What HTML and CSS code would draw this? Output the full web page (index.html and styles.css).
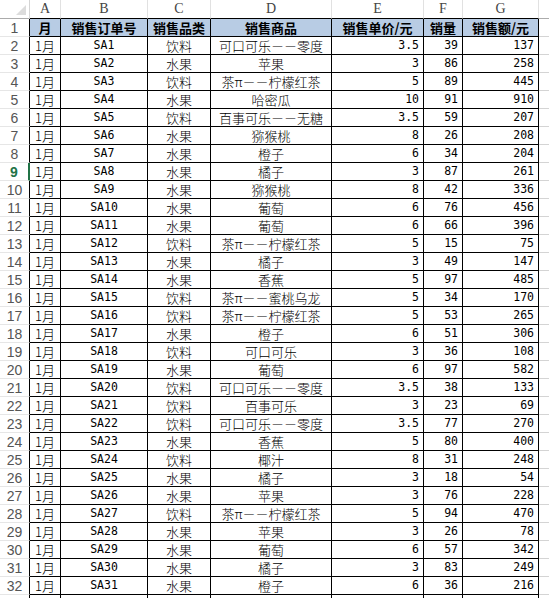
FILE: index.html
```html
<!DOCTYPE html>
<html lang="zh-CN">
<head>
<meta charset="utf-8">
<title>销售表</title>
<link rel="stylesheet" href="styles.css">
</head>
<body>
<div class="sheet">
  <div class="corner"><span class="tri"></span></div>
  <div class="ch">A</div><div class="ch">B</div><div class="ch">C</div><div class="ch">D</div><div class="ch">E</div><div class="ch">F</div><div class="ch">G</div><div class="ch last"></div>

  <div class="rh">1</div><div class="c hd">月</div><div class="c hd">销售订单号</div><div class="c hd">销售品类</div><div class="c hd">销售商品</div><div class="c hd">销售单价/元</div><div class="c hd">销量</div><div class="c hd">销售额/元</div><div class="g"></div>

  <div class="rh">2</div><div class="c">1月</div><div class="c m">SA1</div><div class="c">饮料</div><div class="c">可口可乐－－零度</div><div class="c n">3.5</div><div class="c n">39</div><div class="c n">137</div><div class="g"></div>
  <div class="rh">3</div><div class="c">1月</div><div class="c m">SA2</div><div class="c">水果</div><div class="c">苹果</div><div class="c n">3</div><div class="c n">86</div><div class="c n">258</div><div class="g"></div>
  <div class="rh">4</div><div class="c">1月</div><div class="c m">SA3</div><div class="c">饮料</div><div class="c">茶π－－柠檬红茶</div><div class="c n">5</div><div class="c n">89</div><div class="c n">445</div><div class="g"></div>
  <div class="rh">5</div><div class="c">1月</div><div class="c m">SA4</div><div class="c">水果</div><div class="c">哈密瓜</div><div class="c n">10</div><div class="c n">91</div><div class="c n">910</div><div class="g"></div>
  <div class="rh">6</div><div class="c">1月</div><div class="c m">SA5</div><div class="c">饮料</div><div class="c">百事可乐－－无糖</div><div class="c n">3.5</div><div class="c n">59</div><div class="c n">207</div><div class="g"></div>
  <div class="rh">7</div><div class="c">1月</div><div class="c m">SA6</div><div class="c">水果</div><div class="c">猕猴桃</div><div class="c n">8</div><div class="c n">26</div><div class="c n">208</div><div class="g"></div>
  <div class="rh">8</div><div class="c">1月</div><div class="c m">SA7</div><div class="c">水果</div><div class="c">橙子</div><div class="c n">6</div><div class="c n">34</div><div class="c n">204</div><div class="g"></div>
  <div class="rh active">9</div><div class="c">1月</div><div class="c m">SA8</div><div class="c">水果</div><div class="c">橘子</div><div class="c n">3</div><div class="c n">87</div><div class="c n">261</div><div class="g"></div>
  <div class="rh">10</div><div class="c">1月</div><div class="c m">SA9</div><div class="c">水果</div><div class="c">猕猴桃</div><div class="c n">8</div><div class="c n">42</div><div class="c n">336</div><div class="g"></div>
  <div class="rh">11</div><div class="c">1月</div><div class="c m">SA10</div><div class="c">水果</div><div class="c">葡萄</div><div class="c n">6</div><div class="c n">76</div><div class="c n">456</div><div class="g"></div>
  <div class="rh">12</div><div class="c">1月</div><div class="c m">SA11</div><div class="c">水果</div><div class="c">葡萄</div><div class="c n">6</div><div class="c n">66</div><div class="c n">396</div><div class="g"></div>
  <div class="rh">13</div><div class="c">1月</div><div class="c m">SA12</div><div class="c">饮料</div><div class="c">茶π－－柠檬红茶</div><div class="c n">5</div><div class="c n">15</div><div class="c n">75</div><div class="g"></div>
  <div class="rh">14</div><div class="c">1月</div><div class="c m">SA13</div><div class="c">水果</div><div class="c">橘子</div><div class="c n">3</div><div class="c n">49</div><div class="c n">147</div><div class="g"></div>
  <div class="rh">15</div><div class="c">1月</div><div class="c m">SA14</div><div class="c">水果</div><div class="c">香蕉</div><div class="c n">5</div><div class="c n">97</div><div class="c n">485</div><div class="g"></div>
  <div class="rh">16</div><div class="c">1月</div><div class="c m">SA15</div><div class="c">饮料</div><div class="c">茶π－－蜜桃乌龙</div><div class="c n">5</div><div class="c n">34</div><div class="c n">170</div><div class="g"></div>
  <div class="rh">17</div><div class="c">1月</div><div class="c m">SA16</div><div class="c">饮料</div><div class="c">茶π－－柠檬红茶</div><div class="c n">5</div><div class="c n">53</div><div class="c n">265</div><div class="g"></div>
  <div class="rh">18</div><div class="c">1月</div><div class="c m">SA17</div><div class="c">水果</div><div class="c">橙子</div><div class="c n">6</div><div class="c n">51</div><div class="c n">306</div><div class="g"></div>
  <div class="rh">19</div><div class="c">1月</div><div class="c m">SA18</div><div class="c">饮料</div><div class="c">可口可乐</div><div class="c n">3</div><div class="c n">36</div><div class="c n">108</div><div class="g"></div>
  <div class="rh">20</div><div class="c">1月</div><div class="c m">SA19</div><div class="c">水果</div><div class="c">葡萄</div><div class="c n">6</div><div class="c n">97</div><div class="c n">582</div><div class="g"></div>
  <div class="rh">21</div><div class="c">1月</div><div class="c m">SA20</div><div class="c">饮料</div><div class="c">可口可乐－－零度</div><div class="c n">3.5</div><div class="c n">38</div><div class="c n">133</div><div class="g"></div>
  <div class="rh">22</div><div class="c">1月</div><div class="c m">SA21</div><div class="c">饮料</div><div class="c">百事可乐</div><div class="c n">3</div><div class="c n">23</div><div class="c n">69</div><div class="g"></div>
  <div class="rh">23</div><div class="c">1月</div><div class="c m">SA22</div><div class="c">饮料</div><div class="c">可口可乐－－零度</div><div class="c n">3.5</div><div class="c n">77</div><div class="c n">270</div><div class="g"></div>
  <div class="rh">24</div><div class="c">1月</div><div class="c m">SA23</div><div class="c">水果</div><div class="c">香蕉</div><div class="c n">5</div><div class="c n">80</div><div class="c n">400</div><div class="g"></div>
  <div class="rh">25</div><div class="c">1月</div><div class="c m">SA24</div><div class="c">饮料</div><div class="c">椰汁</div><div class="c n">8</div><div class="c n">31</div><div class="c n">248</div><div class="g"></div>
  <div class="rh">26</div><div class="c">1月</div><div class="c m">SA25</div><div class="c">水果</div><div class="c">橘子</div><div class="c n">3</div><div class="c n">18</div><div class="c n">54</div><div class="g"></div>
  <div class="rh">27</div><div class="c">1月</div><div class="c m">SA26</div><div class="c">水果</div><div class="c">苹果</div><div class="c n">3</div><div class="c n">76</div><div class="c n">228</div><div class="g"></div>
  <div class="rh">28</div><div class="c">1月</div><div class="c m">SA27</div><div class="c">饮料</div><div class="c">茶π－－柠檬红茶</div><div class="c n">5</div><div class="c n">94</div><div class="c n">470</div><div class="g"></div>
  <div class="rh">29</div><div class="c">1月</div><div class="c m">SA28</div><div class="c">水果</div><div class="c">苹果</div><div class="c n">3</div><div class="c n">26</div><div class="c n">78</div><div class="g"></div>
  <div class="rh">30</div><div class="c">1月</div><div class="c m">SA29</div><div class="c">水果</div><div class="c">葡萄</div><div class="c n">6</div><div class="c n">57</div><div class="c n">342</div><div class="g"></div>
  <div class="rh">31</div><div class="c">1月</div><div class="c m">SA30</div><div class="c">水果</div><div class="c">橘子</div><div class="c n">3</div><div class="c n">83</div><div class="c n">249</div><div class="g"></div>
  <div class="rh">32</div><div class="c">1月</div><div class="c m">SA31</div><div class="c">水果</div><div class="c">橙子</div><div class="c n">6</div><div class="c n">36</div><div class="c n">216</div><div class="g"></div>
  <div class="rh"></div><div class="c"></div><div class="c"></div><div class="c"></div><div class="c"></div><div class="c"></div><div class="c"></div><div class="c"></div><div class="g"></div>
</div>
</body>
</html>
```

FILE: styles.css
```css
html, body {
  margin: 0;
  padding: 0;
  background: #ffffff;
}

.sheet {
  display: grid;
  grid-template-columns: 30px 31px 87px 63px 121px 92px 39px 76px 1fr;
  grid-auto-rows: 18px;
  grid-template-rows: 19px;
  font-family: "Noto Sans CJK SC", "Noto Sans", sans-serif;
  font-size: 13px;
  font-weight: 300;
  color: #000;
  overflow: hidden;
}

.sheet > div {
  box-sizing: border-box;
  overflow: hidden;
  white-space: nowrap;
}

.corner {
  position: relative;
  border-right: 1px solid #d4d4d4;
  border-bottom: 1px solid #ababab;
  background: #fff;
}

.tri {
  position: absolute;
  right: 3px;
  bottom: 3px;
  width: 0;
  height: 0;
  border-left: 10px solid transparent;
  border-bottom: 10px solid #dcdcdc;
}

.ch {
  display: flex;
  align-items: center;
  justify-content: center;
  font-family: "Liberation Serif", serif;
  font-size: 14px;
  font-weight: normal;
  color: #444;
  background: #fff;
  border-right: 1px solid #e1e1e1;
  border-bottom: 1px solid #000;
}

.ch.last {
  border-bottom-color: #ababab;
  border-right: none;
}

.rh {
  display: flex;
  align-items: center;
  justify-content: center;
  font-family: "Liberation Sans", sans-serif;
  font-size: 14px;
  font-weight: normal;
  color: #555;
  background: #fff;
  border-right: 1px solid #000;
  border-bottom: 1px solid #e6e6e6;
}

.rh.active {
  color: #217346;
  font-weight: bold;
  border-right: 2px solid #217346;
}

.c {
  display: flex;
  align-items: center;
  justify-content: center;
  line-height: 17px;
  border-right: 1px solid #000;
  border-bottom: 1px solid #000;
}

.c.hd {
  background: #b8cce4;
  font-weight: bold;
}

.c.m {
  font-family: "DejaVu Sans Mono", monospace;
  font-size: 11.5px;
  font-weight: normal;
}

.c.n {
  justify-content: flex-end;
  padding-right: 4px;
  font-family: "DejaVu Sans Mono", monospace;
  font-size: 11.5px;
  font-weight: normal;
}

.g {
  border-bottom: 1px solid #d4d4d4;
}
```
